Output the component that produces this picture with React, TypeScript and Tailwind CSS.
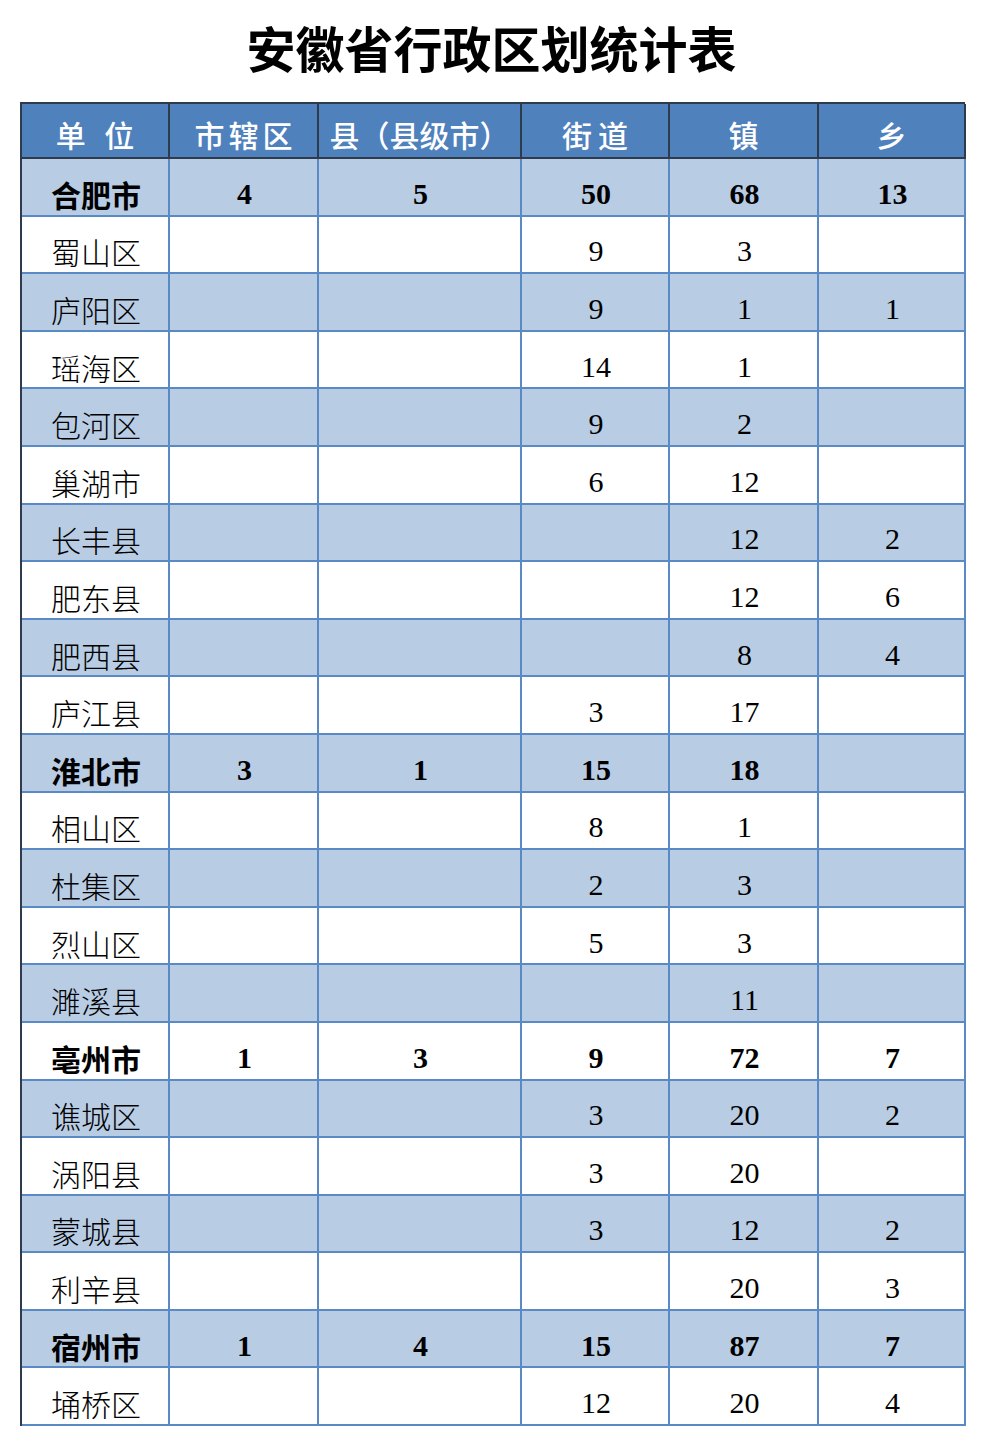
import React from "react";

type Row = { name: string; v: (string | number)[]; bold?: boolean };

const rows: Row[] = [
  { name: "合肥市", v: [4, 5, 50, 68, 13], bold: true },
  { name: "蜀山区", v: ["", "", 9, 3, ""] },
  { name: "庐阳区", v: ["", "", 9, 1, 1] },
  { name: "瑶海区", v: ["", "", 14, 1, ""] },
  { name: "包河区", v: ["", "", 9, 2, ""] },
  { name: "巢湖市", v: ["", "", 6, 12, ""] },
  { name: "长丰县", v: ["", "", "", 12, 2] },
  { name: "肥东县", v: ["", "", "", 12, 6] },
  { name: "肥西县", v: ["", "", "", 8, 4] },
  { name: "庐江县", v: ["", "", 3, 17, ""] },
  { name: "淮北市", v: [3, 1, 15, 18, ""], bold: true },
  { name: "相山区", v: ["", "", 8, 1, ""] },
  { name: "杜集区", v: ["", "", 2, 3, ""] },
  { name: "烈山区", v: ["", "", 5, 3, ""] },
  { name: "濉溪县", v: ["", "", "", 11, ""] },
  { name: "亳州市", v: [1, 3, 9, 72, 7], bold: true },
  { name: "谯城区", v: ["", "", 3, 20, 2] },
  { name: "涡阳县", v: ["", "", 3, 20, ""] },
  { name: "蒙城县", v: ["", "", 3, 12, 2] },
  { name: "利辛县", v: ["", "", "", 20, 3] },
  { name: "宿州市", v: [1, 4, 15, 87, 7], bold: true },
  { name: "埇桥区", v: ["", "", 12, 20, 4] },
];

const headers = [
  { t: "单 位", c: "tracking-[6px] pl-[6px]" },
  { t: "市辖区", c: "tracking-[4px] pl-[4px]" },
  { t: "县（县级市）", c: "tracking-[0px]" },
  { t: "街道", c: "tracking-[6px] pl-[6px]" },
  { t: "镇", c: "" },
  { t: "乡", c: "" },
];

export default function App() {
  return (
    <div className="w-[983px] h-[1443px] bg-white flex flex-col items-center font-['Noto_Sans_CJK_SC',sans-serif]">
      <h1 className="mt-[8px] h-[76px] flex items-center text-[49px] font-bold text-black tracking-[0px] leading-none">
        安徽省行政区划统计表
      </h1>
      <div className="mt-[18px] ml-[2px] w-[945px] border-l-2 border-t-2 border-[#2d3b4d] grid grid-cols-[148px_149px_203px_148px_149px_147px]">
        {headers.map((h, i) => (
          <div
            key={i}
            className={`h-[55px] bg-[#4f81bd] border-r-2 border-b-2 border-[#2d3b4d] flex items-center justify-center pt-[6px] text-white text-[30px] font-medium leading-none ${h.c}`}
          >
            {h.t}
          </div>
        ))}
        {rows.map((r, ri) => {
          const bg = ri % 2 === 0 ? "bg-[#b8cce4]" : "bg-white";
          return (
            <React.Fragment key={ri}>
              <div
                className={`h-[57.6px] ${bg} border-r-2 border-b-2 border-[#5a8ac6] flex items-center justify-center pt-[14px] pl-[2px] text-[30px] leading-none text-black ${
                  r.bold ? "font-bold" : "font-light"
                }`}
              >
                {r.name}
              </div>
              {r.v.map((x, ci) => (
                <div
                  key={ci}
                  className={`h-[57.6px] ${bg} border-r-2 border-b-2 border-[#5a8ac6] flex items-center justify-center pt-[14px] pl-[2px] text-[30px] leading-none text-black font-['Liberation_Serif','Noto_Sans_CJK_SC',serif] ${
                    r.bold ? "font-bold" : "font-normal"
                  }`}
                >
                  {x}
                </div>
              ))}
            </React.Fragment>
          );
        })}
      </div>
    </div>
  );
}
